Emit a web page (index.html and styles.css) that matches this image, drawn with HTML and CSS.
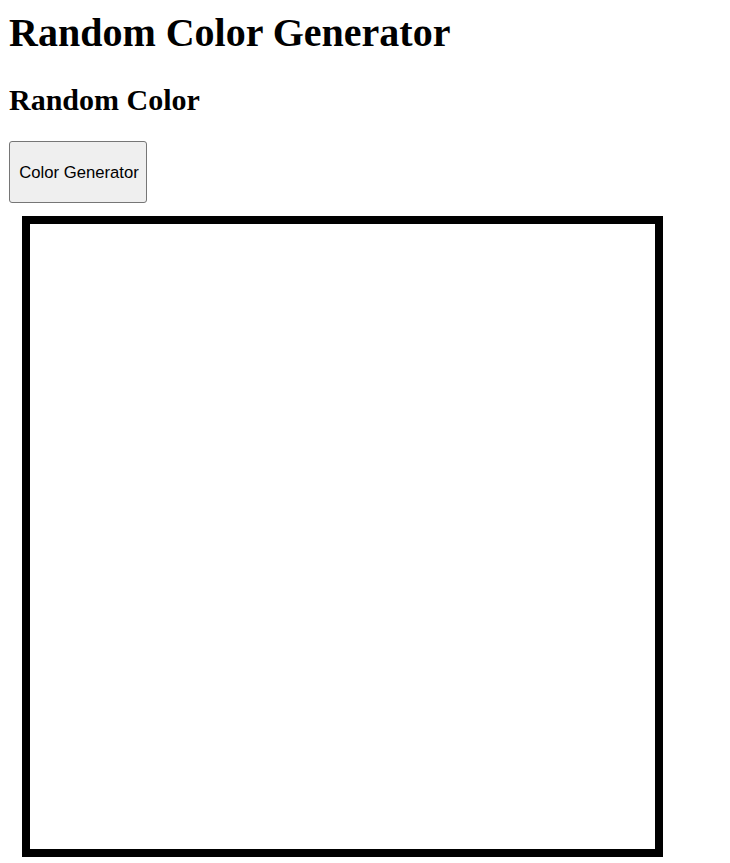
FILE: index.html
```html
<!DOCTYPE html>
<html>
<head>
<meta charset="utf-8">
<title>Random Color Generator</title>
<link rel="stylesheet" href="styles.css">
</head>
<body>
<h1 class="title">Random Color Generator</h1>
<h2 class="subtitle">Random Color</h2>
<div class="controls"><button class="gen-btn" type="button">Color Generator</button></div>
<div class="color-box"></div>
</body>
</html>
```
FILE: styles.css
```css
html, body {
  margin: 0;
  padding: 0;
  background: #ffffff;
}
body {
  padding: 10px 0 0 9px;
  font-family: "Liberation Serif", "Times New Roman", serif;
  color: #000000;
}
.title {
  font-size: 40px;
  line-height: 46px;
  font-weight: bold;
  margin: 0 0 27px;
}
.subtitle {
  font-size: 30px;
  line-height: 34px;
  font-weight: bold;
  margin: 0 0 24px;
}
.controls {
  display: flex;
}
.gen-btn {
  box-sizing: border-box;
  width: 138px;
  height: 62px;
  padding: 2px 0 0 2px;
  white-space: nowrap;
  font-family: "Liberation Sans", Arial, sans-serif;
  font-size: 16.67px;
  color: #000000;
  background: #efefef;
  border: 1px solid #767676;
  border-radius: 3px;
}
.color-box {
  box-sizing: border-box;
  width: 641px;
  height: 641px;
  margin: 13px 0 0 13px;
  border: 8px solid #000000;
  background: #ffffff;
}
```
